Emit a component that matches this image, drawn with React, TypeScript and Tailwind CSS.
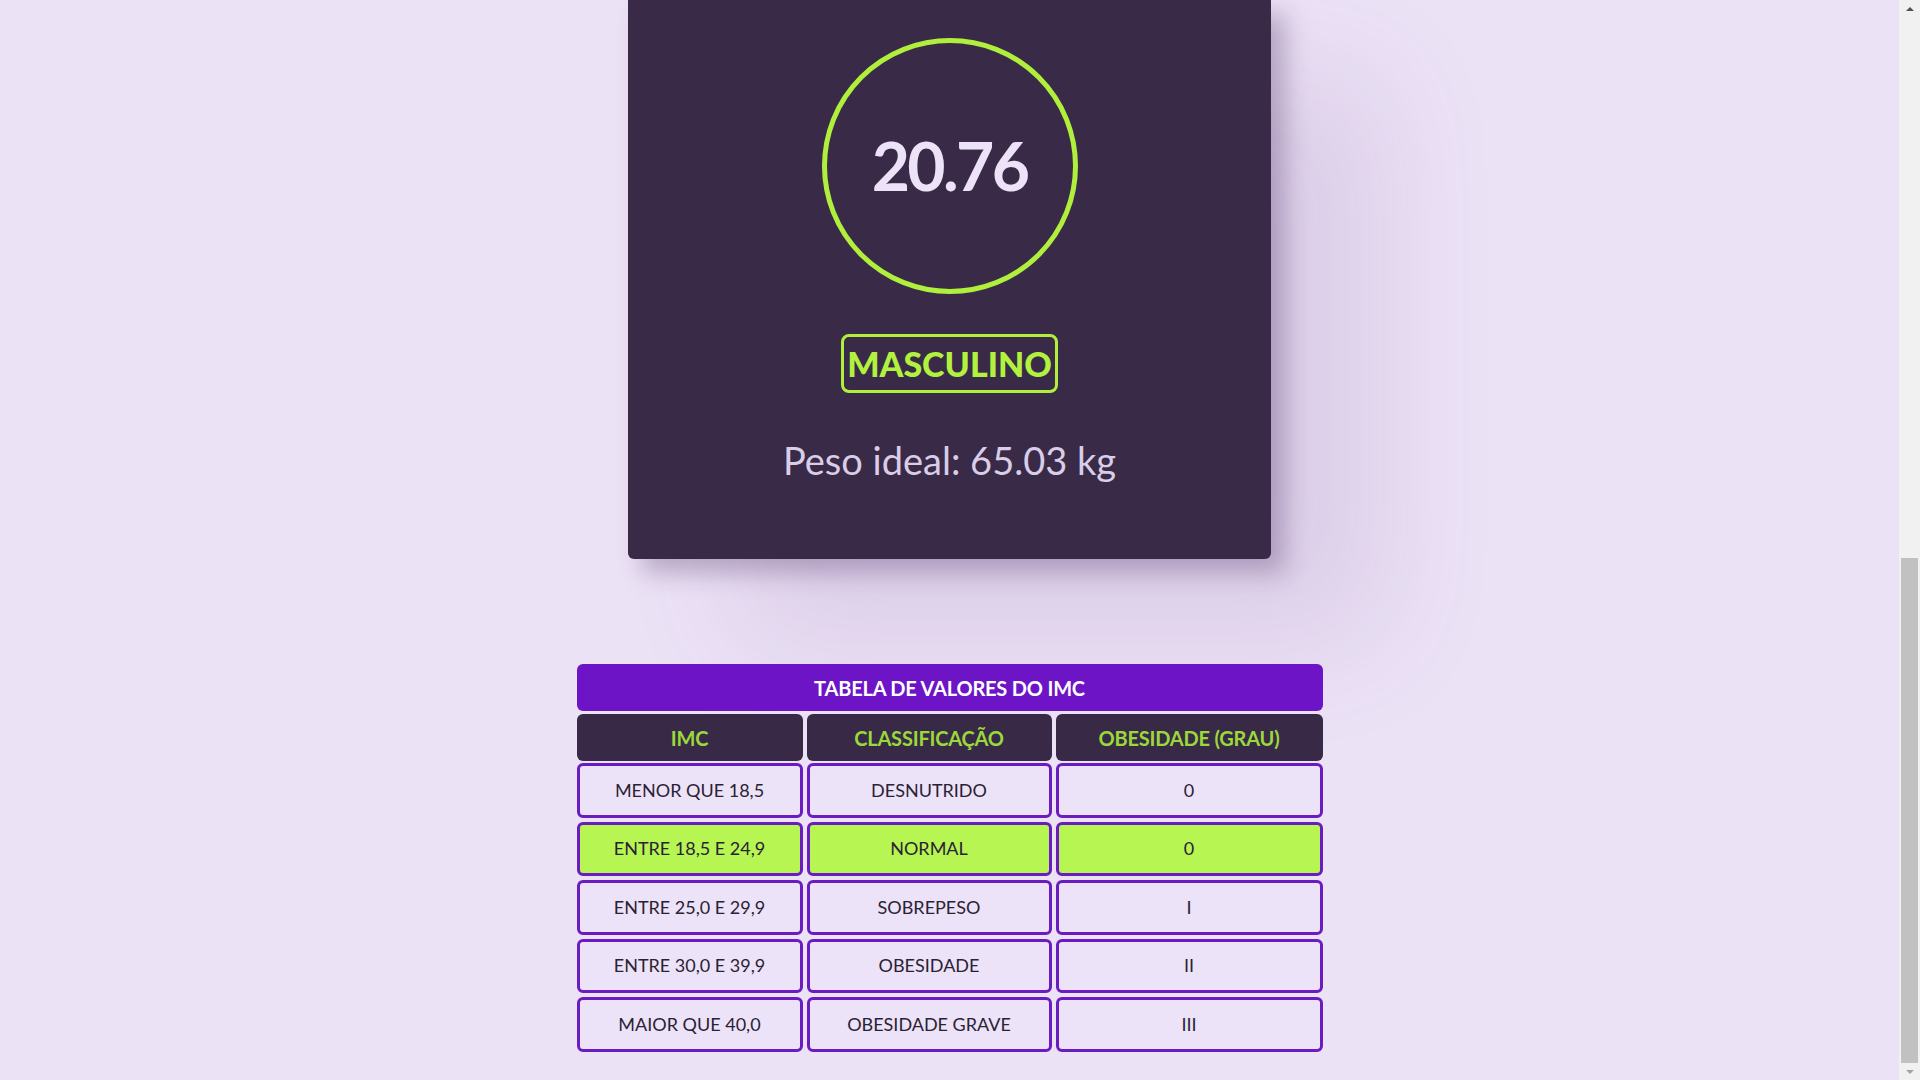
import React from 'react';

const rows = [
    { imc: 'MENOR QUE 18,5', classe: 'DESNUTRIDO', grau: '0', active: false },
    { imc: 'ENTRE 18,5 E 24,9', classe: 'NORMAL', grau: '0', active: true },
    { imc: 'ENTRE 25,0 E 29,9', classe: 'SOBREPESO', grau: 'I', active: false },
    { imc: 'ENTRE 30,0 E 39,9', classe: 'OBESIDADE', grau: 'II', active: false },
    { imc: 'MAIOR QUE 40,0', classe: 'OBESIDADE GRAVE', grau: 'III', active: false },
];

const App: React.FC = () => {
    return (
        <div className="flex h-screen w-full overflow-hidden bg-[#ece2f6] font-['Lato','Noto_Sans',sans-serif]">
            {/* Page content */}
            <div className="flex flex-1 flex-col items-center">
                {/* Result card */}
                <div className="flex w-[643px] flex-col items-center rounded-b-md bg-[#392a47] pt-[38px] pb-[80px] shadow-[14px_14px_24px_rgba(70,40,90,0.3),110px_80px_120px_rgba(100,60,130,0.12)]">
                    <div className="flex h-[256px] w-[256px] items-center justify-center rounded-full border-[5px] border-[#b0f03c]">
                        <span className="text-[66px] leading-none font-bold tracking-[-0.04em] text-[#ede3f8]">20.76</span>
                    </div>

                    <div className="mt-[40px] flex h-[59px] w-[217px] items-center justify-center rounded-lg border-[3px] border-[#b0f03c]">
                        <span className="text-[34px] leading-none font-black text-[#b2f23f]">MASCULINO</span>
                    </div>

                    <p className="mt-[48px] text-[38px] leading-none text-[#d9cde7]">Peso ideal: 65.03 kg</p>
                </div>

                {/* IMC table */}
                <div className="mt-[105px] w-[746px]">
                    <div className="flex h-[47px] items-center justify-center rounded-md bg-[#6c14c6]">
                        <span className="text-[20px] font-bold tracking-[-0.01em] text-white">TABELA DE VALORES DO IMC</span>
                    </div>

                    <div className="mt-[3px] grid grid-cols-[226px_245px_267px] gap-x-[4px] gap-y-[4px]">
                        {['IMC', 'CLASSIFICAÇÃO', 'OBESIDADE (GRAU)'].map((h) => (
                            <div key={h} className="mb-[-2px] flex h-[47px] items-center justify-center rounded-md bg-[#382a46]">
                                <span className="text-[20px] font-bold tracking-[-0.01em] text-[#9bd83a]">{h}</span>
                            </div>
                        ))}

                        {rows.map((r) => (
                            <React.Fragment key={r.imc}>
                                {[r.imc, r.classe, r.grau].map((v, i) => (
                                    <div
                                        key={i}
                                        className={`flex h-[54.5px] items-center justify-center rounded-md border-[3px] border-[#6a1cc0] ${r.active ? 'bg-[#b6f552]' : 'bg-[#ede3f8]'}`}
                                    >
                                        <span className="text-[18px] text-[#2a2233]">{v}</span>
                                    </div>
                                ))}
                            </React.Fragment>
                        ))}
                    </div>
                </div>
            </div>

            {/* Scrollbar (page is scrolled to the bottom) */}
            <div className="flex w-[21px] flex-col items-center bg-[#f1f1f1]">
                <div className="flex h-[17px] items-center justify-center">
                    <span className="h-0 w-0 border-x-[4px] border-b-[4px] border-x-transparent border-b-[#505050]" />
                </div>
                <div className="flex-1" />
                <div className="h-[505px] w-[17px] bg-[#c1c1c1]" />
                <div className="flex h-[17px] items-center justify-center">
                    <span className="h-0 w-0 border-x-[4px] border-t-[4px] border-x-transparent border-t-[#a3a3a3]" />
                </div>
            </div>
        </div>
    );
};

export default App;
